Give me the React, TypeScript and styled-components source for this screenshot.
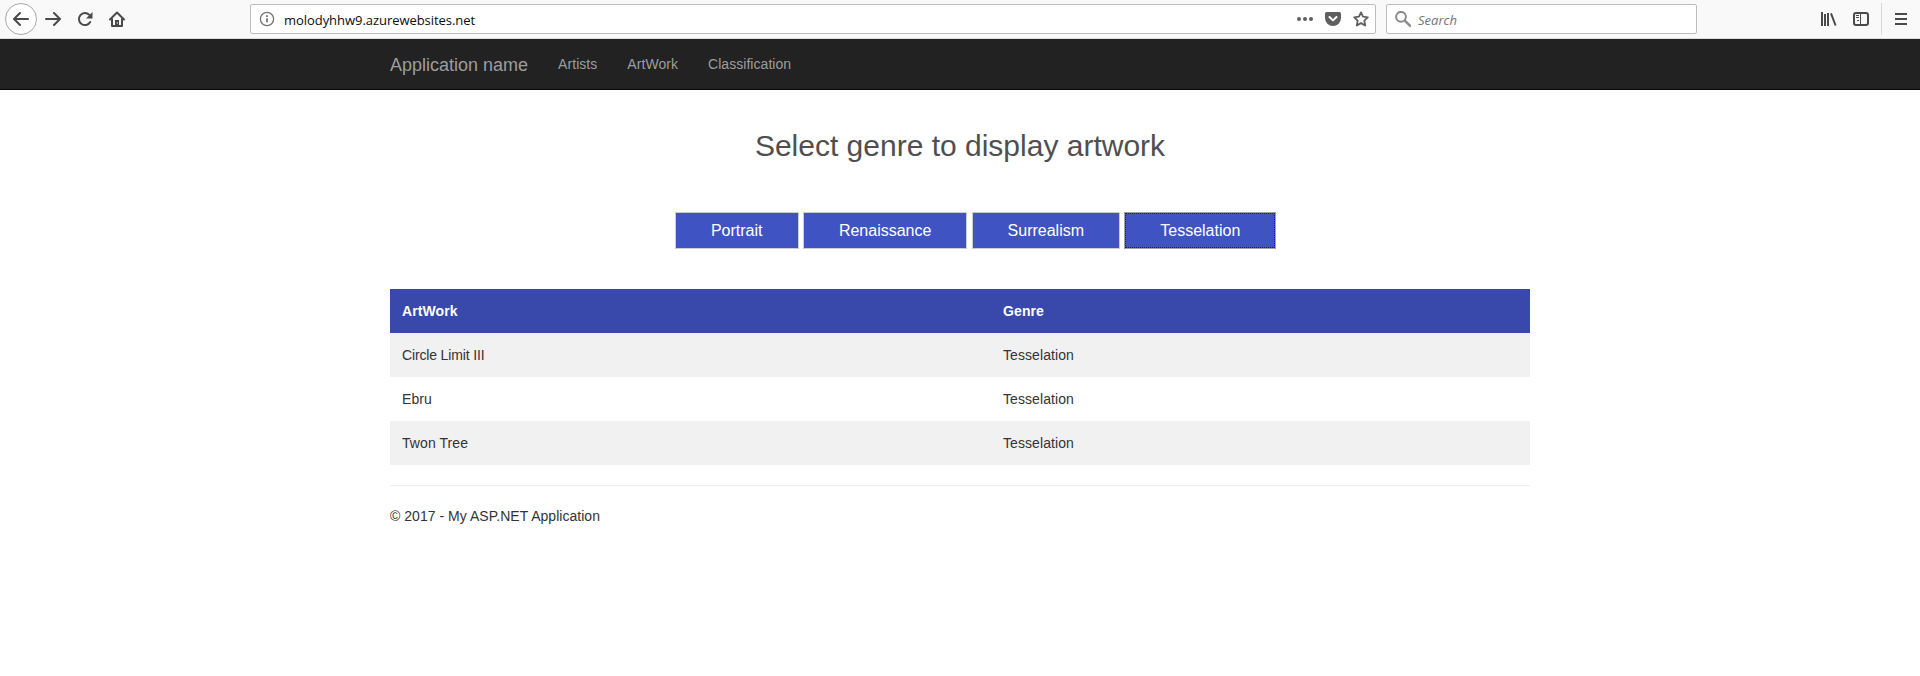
import React from 'react';
import styled, { createGlobalStyle } from 'styled-components';

const GlobalStyle = createGlobalStyle`
  *, *::before, *::after { box-sizing: border-box; }
  body {
    margin: 0;
    background: #fff;
    color: #333;
    font: 14px/20px "Liberation Sans", Arial, sans-serif;
  }
`;

const BrowserBar = styled.header`
  display: flex;
  align-items: center;
  height: 39px;
  padding: 0 3px 1px 5px;
  background: #f9f9f9;
  border-bottom: 1px solid #dcdcdc;
  color: #4a4a4a;
`;

const NavButtons = styled.div`
  display: flex;
  align-items: center;
  width: 245px;
`;

const BackButton = styled.span`
  display: flex;
  align-items: center;
  justify-content: center;
  width: 32px;
  height: 32px;
  border: 1px solid #a8a8a8;
  border-radius: 50%;
  background: #fff;
`;

const IconSlot = styled.span`
  display: flex;
  align-items: center;
  justify-content: center;
  width: 32px;
  height: 32px;
`;

const Field = styled.div<{ $width: number }>`
  display: flex;
  align-items: center;
  width: ${(p) => p.$width}px;
  height: 30px;
  padding: 0 6px 0 8px;
  border: 1px solid #bdbdbd;
  border-radius: 2px;
  background: #fff;
  font-family: "Open Sans", "Noto Sans", sans-serif;
  font-size: 13px;
  color: #0c0c0d;
`;

const Address = styled.span`
  flex: 1;
  padding: 2px 0 0 9px;
  letter-spacing: -0.05px;
`;

const FieldActions = styled.span`
  display: flex;
  gap: 12px;
  color: #5f5f5f;
`;

const SearchField = styled(Field)`
  margin-left: 10px;
`;

const SearchHint = styled.span`
  padding: 2px 0 0 7px;
  font-style: italic;
  color: #737373;
`;

const Tools = styled.div`
  display: flex;
  align-items: center;
  margin-left: auto;
`;

const Divider = styled.span`
  width: 1px;
  height: 32px;
  margin: 0 3px 0 4px;
  background: #d7d7d7;
`;

const Container = styled.div`
  width: 1140px;
  margin: 0 auto;
`;

const Navbar = styled.nav`
  height: 51px;
  background: #222;
  border-bottom: 1px solid #080808;
`;

const NavList = styled(Container)`
  display: flex;
  align-items: center;
  height: 50px;
`;

const Brand = styled.a`
  margin-right: 15px;
  padding-top: 2px;
  font-size: 18px;
  color: #9d9d9d;
`;

const NavLink = styled.a`
  padding: 0 15px;
  letter-spacing: 0.05px;
  color: #9d9d9d;
`;

const Title = styled.h2`
  margin: 0;
  padding-top: 39px;
  font-size: 30px;
  font-weight: 400;
  line-height: 33px;
  text-align: center;
  color: #4f4f4f;
`;

const GenreButtons = styled.div`
  display: flex;
  justify-content: center;
  gap: 4.2px;
  padding: 50px 0 40px 31px;
`;

const GenreButton = styled.button<{ $focused?: boolean }>`
  height: 37px;
  padding: 0 35px;
  border: 1px solid ${(p) => (p.$focused ? '#a2a2a2' : '#ccc')};
  border-radius: 0;
  background: #3f54c2;
  color: #fff;
  font: 16px/22px "Liberation Sans", Arial, sans-serif;
  outline: ${(p) => (p.$focused ? '1px dotted #222' : 'none')};
  outline-offset: -2px;
  &:first-child { min-width: 124px; }
`;

const Table = styled.table`
  width: 100%;
  border-collapse: collapse;
  table-layout: fixed;
`;

const HeadCell = styled.th`
  height: 44px;
  padding: 0 12px;
  background: #3949ab;
  color: #fff;
  text-align: left;
  letter-spacing: 0.1px;
  &:first-child { width: 601px; }
`;

const Row = styled.tr`
  &:nth-child(odd) { background: #f1f1f1; }
`;

const Cell = styled.td<{ $tracking?: number }>`
  height: 44px;
  padding: 0 12px;
  letter-spacing: ${(p) => p.$tracking ?? 0.08}px;
`;

const Footer = styled.footer`
  margin-top: 20px;
  padding-top: 20px;
  border-top: 1px solid #eee;
  letter-spacing: 0.03px;
`;

const line = { fill: 'none', stroke: 'currentColor', strokeWidth: 2, strokeLinecap: 'round', strokeLinejoin: 'round' } as const;

const Icon = ({ children }: { children: React.ReactNode }) => (
  <svg width="16" height="16" viewBox="0 0 16 16" {...line}>{children}</svg>
);

const genres = ['Portrait', 'Renaissance', 'Surrealism', 'Tesselation'];
const artworks = [
  { name: 'Circle Limit III', tracking: -0.15 },
  { name: 'Ebru', tracking: 0.08 },
  { name: 'Twon Tree', tracking: 0.08 },
];

export default function App() {
  return (
    <>
      <GlobalStyle />
      <BrowserBar>
        <NavButtons>
          <BackButton><Icon><path d="M15 8H1.5M7 2 1 8l6 6" /></Icon></BackButton>
          <IconSlot><Icon><path d="M1 8h13.5M9 2l6 6-6 6" /></Icon></IconSlot>
          <IconSlot>
            <Icon>
              <path d="M12.3 3.9A6 6 0 1 0 13.2 11" />
              <path d="M15.5 1v6.5H9z" fill="currentColor" stroke="none" />
            </Icon>
          </IconSlot>
          <IconSlot>
            <Icon>
              <path d="M1 8.5 8 1.5l7 7M3 8v7h10V8" />
              <path d="M6 15V9h4v6" fill="currentColor" stroke="none" />
              <path d="M8.3 11.7v.5" stroke="#f9f9f9" strokeWidth="1" />
            </Icon>
          </IconSlot>
        </NavButtons>
        <Field $width={1126}>
          <Icon>
            <g stroke="#737373" strokeWidth="1.3">
              <circle cx="8" cy="8" r="6.6" />
              <path d="M8 7.2v4.1M8 4.2v1.8" strokeWidth="1.8" strokeLinecap="butt" />
            </g>
          </Icon>
          <Address>molodyhhw9.azurewebsites.net</Address>
          <FieldActions>
            <Icon>
              <g fill="currentColor" stroke="none">
                <circle cx="2" cy="8" r="2" />
                <circle cx="8" cy="8" r="2" />
                <circle cx="14" cy="8" r="2" />
              </g>
            </Icon>
            <Icon>
              <path d="M1.8 1h12.4C15.3 1 16 1.7 16 2.8V7A8 8 0 0 1 0 7V2.8C0 1.7.7 1 1.8 1z" fill="currentColor" stroke="none" />
              <path d="m4.5 6 3.5 3.4L11.5 6" stroke="#fff" />
            </Icon>
            <Icon><path d="m8 1.4 2 4.3 4.8.6-3.5 3.3.9 4.9L8 12.1l-4.2 2.4.9-4.9L1.2 6.3 6 5.7z" strokeWidth="1.8" /></Icon>
          </FieldActions>
        </Field>
        <SearchField $width={311}>
          <Icon>
            <g stroke="#8a8a8a">
              <circle cx="6" cy="5.8" r="4.9" />
              <path d="m9.8 9.6 5.4 5.2" strokeWidth="2.3" />
            </g>
          </Icon>
          <SearchHint>Search</SearchHint>
        </SearchField>
        <Tools>
          <IconSlot>
            <Icon><path d="M1 1v14M4 3v12M7 2v13M10 2.3 14.6 14.5" strokeLinecap="butt" /></Icon>
          </IconSlot>
          <IconSlot>
            <Icon>
              <rect x="1" y="2" width="14" height="12" rx="2" />
              <path d="M7.5 2v12M3 4.5h3M3 6.5h3M4 9.5h2" strokeWidth="1" strokeLinecap="butt" />
            </Icon>
          </IconSlot>
          <Divider />
          <IconSlot>
            <Icon><path d="M2 3h12M2 8h12M2 13h12" strokeLinecap="butt" /></Icon>
          </IconSlot>
        </Tools>
      </BrowserBar>

      <Navbar>
        <NavList>
          <Brand>Application name</Brand>
          <NavLink>Artists</NavLink>
          <NavLink>ArtWork</NavLink>
          <NavLink>Classification</NavLink>
        </NavList>
      </Navbar>

      <Container as="main">
        <Title>Select genre to display artwork</Title>
        <GenreButtons>
          {genres.map((genre) => (
            <GenreButton key={genre} $focused={genre === 'Tesselation'}>{genre}</GenreButton>
          ))}
        </GenreButtons>
        <Table>
          <thead>
            <tr>
              <HeadCell>ArtWork</HeadCell>
              <HeadCell>Genre</HeadCell>
            </tr>
          </thead>
          <tbody>
            {artworks.map(({ name, tracking }) => (
              <Row key={name}>
                <Cell $tracking={tracking}>{name}</Cell>
                <Cell>Tesselation</Cell>
              </Row>
            ))}
          </tbody>
        </Table>
        <Footer>© 2017 - My ASP.NET Application</Footer>
      </Container>
    </>
  );
}
